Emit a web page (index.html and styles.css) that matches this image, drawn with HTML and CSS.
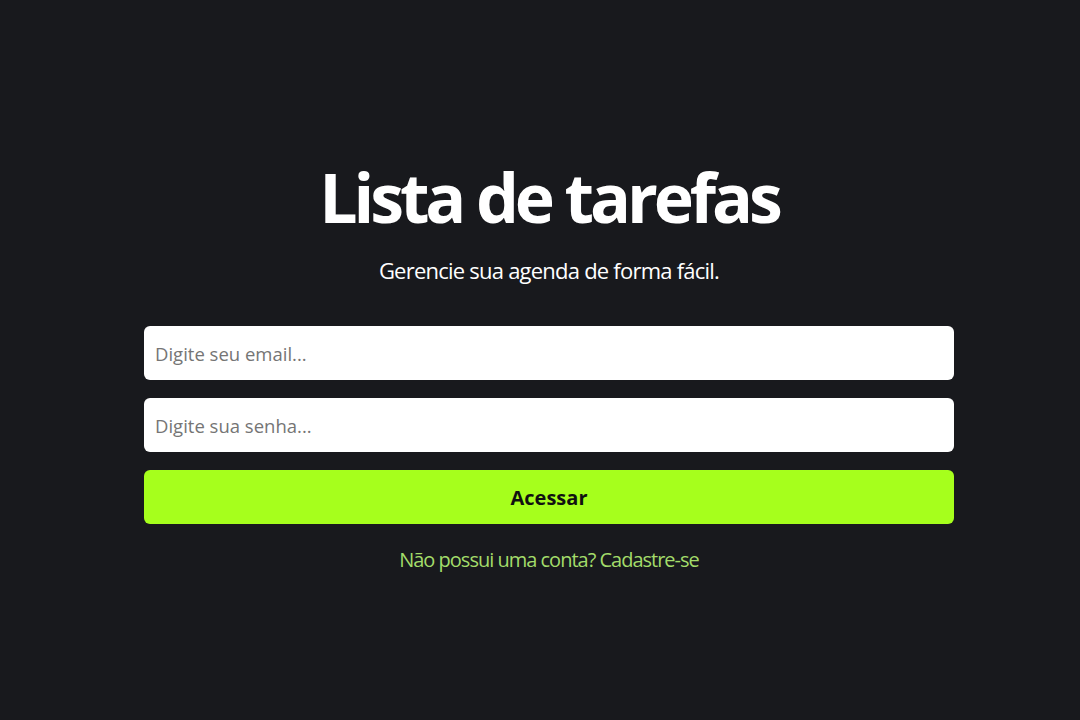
FILE: index.html
```html
<!DOCTYPE html>
<html lang="pt-BR">
<head>
<meta charset="utf-8">
<title>Lista de tarefas</title>
<link rel="stylesheet" href="styles.css">
</head>
<body>
  <main class="page">
    <section class="login">
      <h1 class="title">Lista de tarefas</h1>
      <p class="subtitle">Gerencie sua agenda de forma fácil.</p>
      <form class="form">
        <input class="field" type="email" placeholder="Digite seu email...">
        <input class="field" type="password" placeholder="Digite sua senha...">
        <button class="btn" type="button">Acessar</button>
      </form>
      <a class="link" href="#">Não possui uma conta? Cadastre-se</a>
    </section>
  </main>
</body>
</html>
```
FILE: styles.css
```css
* { box-sizing: border-box; }
html, body { margin: 0; padding: 0; }
body {
  background: #18191d;
  font-family: "Open Sans", "Noto Sans", sans-serif;
  color: #fff;
  width: 1080px;
  height: 720px;
  overflow: hidden;
}
.page {
  display: flex;
  justify-content: center;
  padding-left: 18px;
  padding-top: 157px;
}
.login {
  width: 810px;
  display: flex;
  flex-direction: column;
  align-items: center;
}
.title {
  margin: 0;
  font-size: 68px;
  font-weight: 700;
  line-height: 80px;
  letter-spacing: -0.06em;
}
.subtitle {
  margin: 18px 0 0;
  font-size: 22px;
  line-height: 30px;
  letter-spacing: -0.035em;
}
.form {
  width: 100%;
  display: flex;
  flex-direction: column;
  gap: 18px;
  margin-top: 41px;
}
.field {
  height: 54px;
  border: 0;
  border-radius: 6px;
  background: #fff;
  padding: 0 11px;
  font-family: inherit;
  font-size: 18.5px;
  color: #222;
  outline: none;
}
.field::placeholder { color: #757575; }
.btn {
  height: 54px;
  border: 0;
  border-radius: 6px;
  background: #a6ff1c;
  color: #111;
  font-family: inherit;
  font-size: 20px;
  font-weight: 700;
  cursor: pointer;
}
.link {
  margin-top: 22px;
  font-size: 20px;
  line-height: 28px;
  letter-spacing: -0.05em;
  color: #a3dc6a;
  text-decoration: none;
}
```
